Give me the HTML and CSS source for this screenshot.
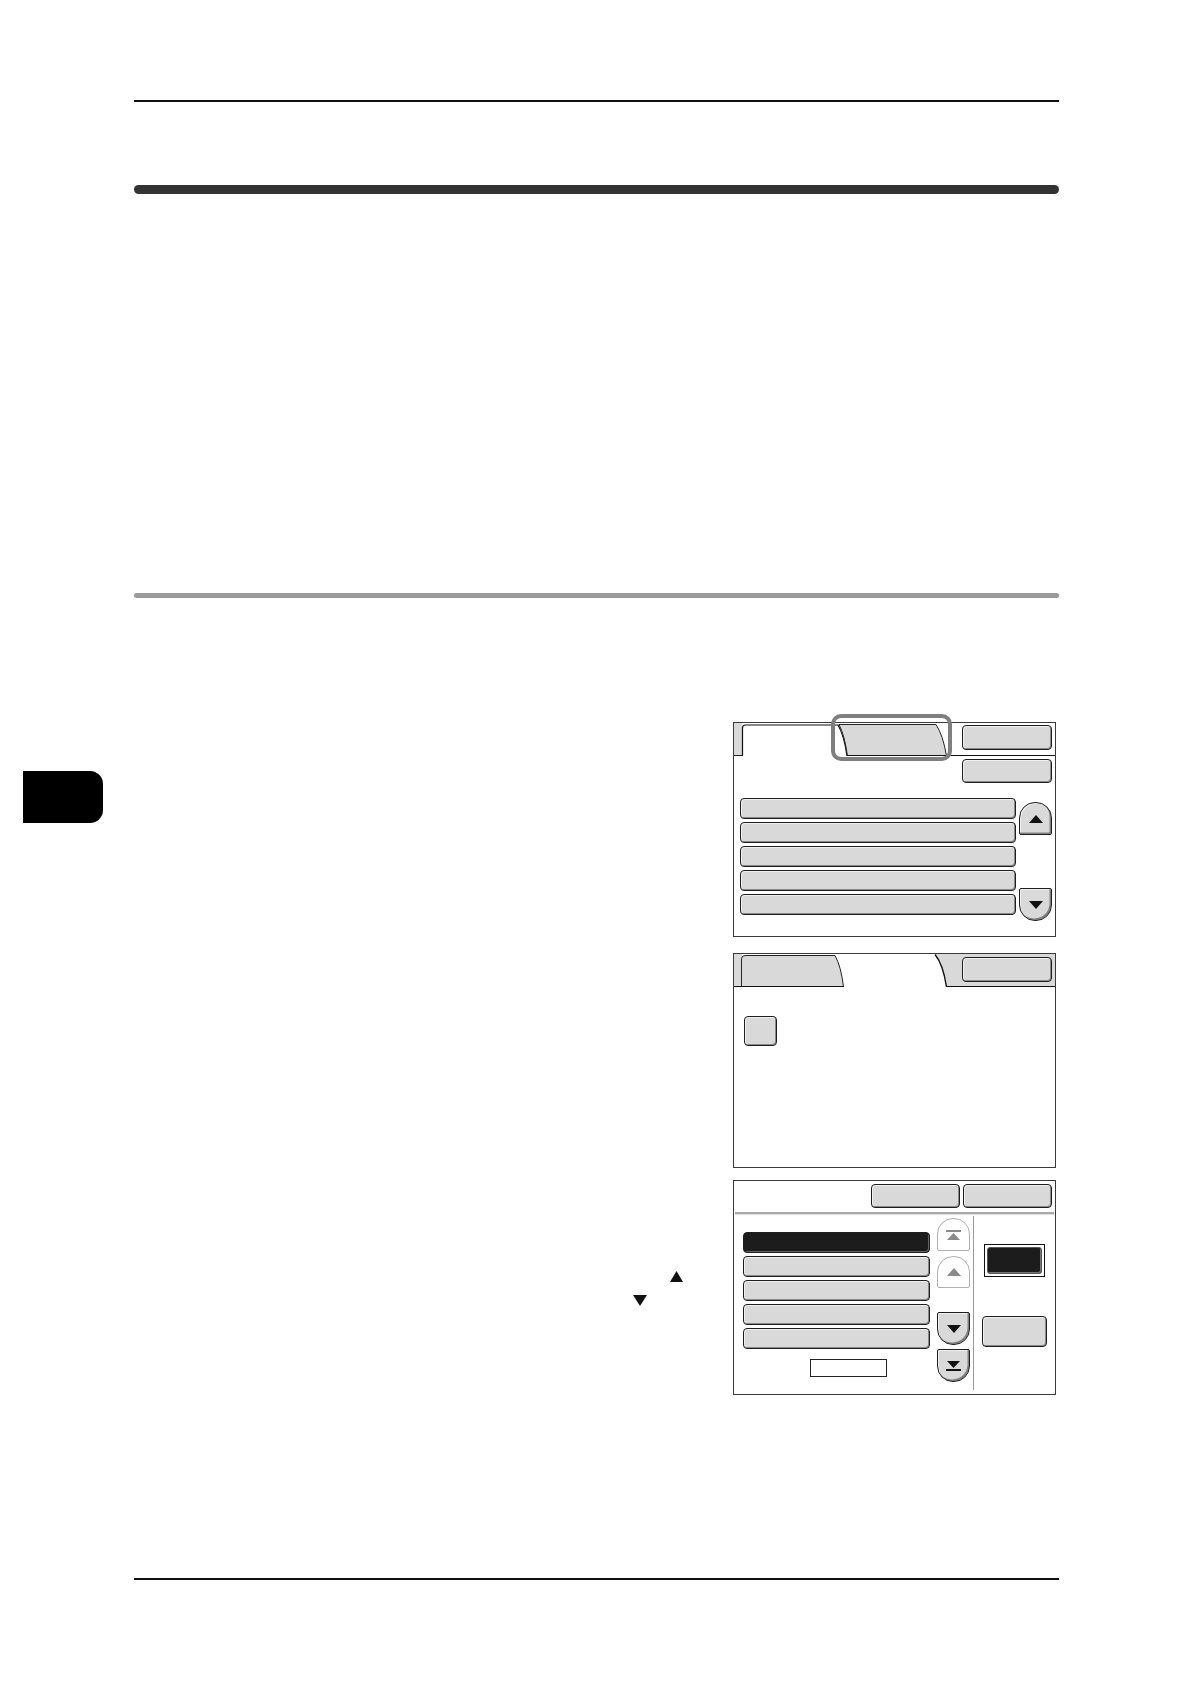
FILE: index.html
```html
<!DOCTYPE html>
<html>
<head>
<meta charset="utf-8">
<link rel="stylesheet" href="styles.css">
</head>
<body>
<div class="page">
  <div class="rule-top"></div>
  <div class="bar-thick"></div>
  <div class="bar-gray"></div>

  <div class="main-row">
    <div class="side-tab"></div>
    <div class="text-col">
      <svg class="tri tri-up" width="13" height="11" viewBox="0 0 13 11"><polygon points="6.5,0 13,11 0,11" fill="#111"/></svg>
      <svg class="tri tri-down" width="14" height="11" viewBox="0 0 14 11"><polygon points="0,0 14,0 7,11" fill="#111"/></svg>
    </div>
    <div class="panels">
      <!-- Panel 1 -->
      <div class="panel p1">
        <div class="strip">
          <svg class="tabs" width="213" height="33" viewBox="0 0 213 33">
            <rect x="0" y="0" width="8" height="33" fill="#d9d9d9"/>
            <path d="M0,32.5 H8" stroke="#222" stroke-width="1"/>
            <path d="M8.5,33 V5 Q8.5,2 11.5,2 H104 Q110,12 113,33" fill="#fff" stroke="#111" stroke-width="1.2"/>
            <path d="M105,1.5 H202 Q209,12 212.5,33 H113.5 Q110.5,12 105,1.5 Z" fill="#d9d9d9" stroke="#222" stroke-width="1"/>
            <path d="M113,32.5 H213" stroke="#111" stroke-width="1"/>
          </svg>
          <div class="strip-rest white">
            <div class="btn btn-wide"></div>
          </div>
        </div>
        <div class="btn btn-wide p1-btn2"></div>
        <div class="p1-body">
          <div class="list p1-list">
            <div class="row-item"></div>
            <div class="row-item"></div>
            <div class="row-item"></div>
            <div class="row-item"></div>
            <div class="row-item"></div>
          </div>
          <div class="scroll p1-scroll">
            <div class="sb sb-up">
              <svg width="14" height="8" viewBox="0 0 14 8"><polygon points="7,0 14,8 0,8" fill="#111"/></svg>
            </div>
            <div class="sb sb-down p1-down">
              <svg width="14" height="8" viewBox="0 0 14 8"><polygon points="0,0 14,0 7,8" fill="#111"/></svg>
            </div>
          </div>
        </div>
        <div class="highlight"></div>
      </div>

      <!-- Panel 2 -->
      <div class="panel p2">
        <div class="strip">
          <svg class="tabs" width="213" height="33" viewBox="0 0 213 33">
            <rect x="0" y="0" width="8" height="33" fill="#d9d9d9"/>
            <path d="M7.5,33 V5 Q7.5,1.5 11,1.5 H101 Q107,12 109.5,33 Z" fill="#d9d9d9" stroke="#222" stroke-width="1"/>
            <path d="M201,0 H213 V33 H212.5 Q209,10 201,0 Z" fill="#d9d9d9"/>
            <path d="M201,0.5 Q209,10 212.5,33" fill="none" stroke="#111" stroke-width="1.4"/>
            <path d="M0,32.5 H110 M212,32.5 H213" stroke="#111" stroke-width="1"/>
          </svg>
          <div class="strip-rest gray">
            <div class="btn btn-wide"></div>
          </div>
        </div>
        <div class="btn p2-square"></div>
      </div>

      <!-- Panel 3 -->
      <div class="panel p3">
        <div class="p3-top">
          <div class="btn btn-top"></div>
          <div class="btn btn-top"></div>
        </div>
        <div class="p3-divider"></div>
        <div class="p3-body">
          <div class="p3-listcol">
            <div class="list p3-list">
              <div class="row-item dark"></div>
              <div class="row-item"></div>
              <div class="row-item"></div>
              <div class="row-item"></div>
              <div class="row-item"></div>
            </div>
            <div class="page-box"></div>
          </div>
          <div class="scroll p3-scroll">
            <div class="sb sb-up off sb-first">
              <svg width="15" height="10" viewBox="0 0 15 10"><rect x="0" y="0" width="15" height="2" fill="#8a8a8a"/><polygon points="7.5,3 14,10 1,10" fill="#8a8a8a"/></svg>
            </div>
            <div class="sb sb-up off sb-second">
              <svg width="14" height="8" viewBox="0 0 14 8"><polygon points="7,0 14,8 0,8" fill="#8a8a8a"/></svg>
            </div>
            <div class="sb sb-down sb-third">
              <svg width="14" height="8" viewBox="0 0 14 8"><polygon points="0,0 14,0 7,8" fill="#111"/></svg>
            </div>
            <div class="sb sb-down sb-fourth">
              <svg width="15" height="10" viewBox="0 0 15 10"><polygon points="1,0 14,0 7.5,7" fill="#111"/><rect x="0" y="8" width="15" height="2" fill="#111"/></svg>
            </div>
          </div>
          <div class="vdivider"></div>
          <div class="p3-right">
            <div class="frame"><div class="btn-dark"></div></div>
            <div class="btn btn-side"></div>
          </div>
        </div>
      </div>
    </div>
  </div>

  <div class="rule-bottom"></div>
</div>
</body>
</html>
```

FILE: styles.css
```css
html, body {
  margin: 0;
  padding: 0;
  background: #fff;
  font-family: "Liberation Sans", Arial, sans-serif;
}

.page {
  width: 1190px;
  height: 1684px;
  overflow: hidden;
}

.rule-top {
  margin: 100px 0 0 134px;
  width: 925px;
  height: 1.5px;
  background: #111;
}

.bar-thick {
  margin: 83.5px 0 0 134px;
  width: 925px;
  height: 9px;
  border-radius: 4.5px;
  background: #333;
}

.bar-gray {
  margin: 399px 0 0 134px;
  width: 925px;
  height: 5px;
  border-radius: 2.5px;
  background: #9a9a9a;
}

.main-row {
  display: flex;
  align-items: flex-start;
  margin-top: 124px;
}

.side-tab {
  margin: 49px 0 0 23px;
  width: 80px;
  height: 52px;
  background: #000;
  border-radius: 0 13px 13px 0;
  flex: none;
}

.text-col {
  margin-left: 31px;
  width: 599px;
  flex: none;
}

.tri {
  display: block;
}

.tri-up {
  margin: 549px 0 0 536px;
}

.tri-down {
  margin: 13px 0 0 499px;
}

.panels {
  width: 323px;
  flex: none;
  display: flex;
  flex-direction: column;
}

.panel {
  position: relative;
  box-sizing: border-box;
  width: 323px;
  height: 215px;
  border: 1px solid #3a3a3a;
  background: #fff;
}

.p2 { margin-top: 16px; }
.p3 { margin-top: 12px; }

/* tab strips */
.strip {
  display: flex;
  height: 33px;
}

.tabs {
  display: block;
  flex: none;
}

.strip-rest {
  flex: 1;
  box-sizing: border-box;
  height: 33px;
  border-bottom: 1px solid #111;
  padding: 2px 3px 0 15px;
}

.strip-rest.gray {
  background: #d9d9d9;
  padding-top: 3px;
}

/* generic buttons */
.btn {
  box-sizing: border-box;
  background: #d9d9d9;
  border: 1px solid #1e1e1e;
  border-radius: 4px;
  box-shadow: inset -1px -1px 0 #8a8a8a, inset 1px 1px 0 #f0f0f0;
}

.btn-wide {
  width: 90px;
  height: 25px;
}

.p1-btn2 {
  margin: 3px 3px 0 auto;
  height: 24px;
}

.p1-body {
  display: flex;
  margin-top: 15px;
}

.list {
  display: flex;
  flex-direction: column;
  gap: 3px;
}

.row-item {
  box-sizing: border-box;
  height: 21px;
  background: #d9d9d9;
  border: 1px solid #1e1e1e;
  border-radius: 4px;
  box-shadow: inset -1px -1px 0 #8a8a8a, inset 1px 1px 0 #f0f0f0;
}

.row-item.dark {
  background: #1c1c1c;
  box-shadow: inset -1px -1px 0 #666;
}

.p1-list {
  margin-left: 6px;
  width: 276px;
}

.scroll {
  display: flex;
  flex-direction: column;
}

.p1-scroll {
  margin: 4px 0 0 3px;
  width: 33px;
}

.sb {
  box-sizing: border-box;
  width: 33px;
  height: 33px;
  background: #d9d9d9;
  border: 1px solid #1e1e1e;
  box-shadow: inset -1.5px -1.5px 0 #808080, inset 1px 1px 0 #f0f0f0;
  display: flex;
  align-items: center;
  justify-content: center;
}

.sb svg { display: block; }

.sb-up {
  border-radius: 16px 16px 2px 2px;
}

.sb-down {
  border-radius: 2px 2px 16px 16px;
}

.sb.off {
  background: #fff;
  border-color: #b0b0b0;
  box-shadow: none;
}

.p1-down {
  margin-top: 53px;
}

.highlight {
  position: absolute;
  left: 97px;
  top: -9px;
  width: 121px;
  height: 47px;
  box-sizing: border-box;
  border: 4px solid #7f7f7f;
  border-radius: 10px;
}

/* panel 2 */
.p2-square {
  margin: 29px 0 0 10px;
  width: 33px;
  height: 30px;
}

/* panel 3 */
.p3-top {
  display: flex;
  justify-content: flex-end;
  gap: 3px;
  height: 31px;
  box-sizing: border-box;
  padding: 3px 3px 0 0;
}

.btn-top {
  width: 89px;
  height: 24px;
}

.p3-divider {
  margin: 0 1px;
  height: 2px;
  background: #a8a8a8;
  border-bottom: 1px solid #e0e0e0;
}

.p3-body {
  display: flex;
  align-items: flex-start;
}

.p3-listcol {
  margin-left: 9px;
  width: 187px;
  padding-top: 17px;
}

.page-box {
  margin: 10px 0 0 67px;
  width: 77px;
  height: 18px;
  box-sizing: border-box;
  border: 1px solid #222;
  background: #fff;
}

.p3-scroll {
  margin-left: 7px;
  width: 33px;
  padding-top: 3px;
}

.sb-second { margin-top: 5px; height: 32px; }
.sb-third { margin-top: 24px; }
.sb-fourth { margin-top: 4px; }

.vdivider {
  margin: 1px 0 0 3px;
  width: 1px;
  height: 174px;
  background: #9a9a9a;
}

.p3-right {
  display: flex;
  flex-direction: column;
  align-items: flex-start;
}

.frame {
  margin: 29px 0 0 10px;
  width: 61px;
  height: 33px;
  box-sizing: border-box;
  border: 1px solid #111;
  padding: 2px;
}

.btn-dark {
  width: 100%;
  height: 100%;
  box-sizing: border-box;
  background: #1c1c1c;
  border: 1px solid #555;
  border-radius: 3px;
  box-shadow: inset -1px -1px 0 #777;
}

.btn-side {
  margin: 39px 0 0 8px;
  width: 65px;
  height: 31px;
}

.rule-bottom {
  margin: 183px 0 0 134px;
  width: 925px;
  height: 1.5px;
  background: #111;
}
```
